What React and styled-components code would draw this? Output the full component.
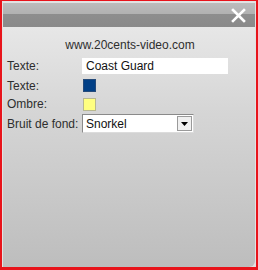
import React from "react";
import styled, { createGlobalStyle } from "styled-components";

const Global = createGlobalStyle`
  html, body { margin: 0; padding: 0; background: #fff; }
  body { font-family: "Liberation Sans", Arial, sans-serif; }
`;

const Frame = styled.div`
  width: 258px;
  height: 270px;
  box-sizing: border-box;
  border: 2px solid #e8141b;
  border-top-width: 1px;
  border-bottom-width: 3px;
  background: #e2e2e2;
  display: flex;
  flex-direction: column;
`;

const Window = styled.div`
  flex: 1;
  margin: 2px 1px 0 1px;
  display: flex;
  flex-direction: column;
  border-radius: 0 0 6px 0;
  overflow: hidden;
  background: linear-gradient(#ececec 0%, #d6d6d6 40%, #bdbdbd 100%);
`;

const TitleBar = styled.div`
  height: 24px;
  display: flex;
  align-items: center;
  justify-content: flex-end;
  padding-right: 9px;
  background: linear-gradient(#bcbcbc 0%, #b2b2b2 44%, #8e8e8e 45%, #8a8a8a 100%);
`;

const Close = styled.svg`
  width: 15px;
  height: 15px;
`;

const Body = styled.div`
  padding: 10px 4px 0 4px;
  display: flex;
  flex-direction: column;
  font-size: 12px;
  color: #2e2e2e;
`;

const Url = styled.div`
  text-align: center;
  height: 16px;
  line-height: 16px;
  margin-bottom: 3px;
  padding-left: 2px;
`;

const Row = styled.div`
  display: grid;
  grid-template-columns: 75px 1fr;
  align-items: center;
  height: ${(p) => p.$h || 18}px;
`;

const Label = styled.span`
  line-height: 14px;
`;

const TextInput = styled.div`
  width: 146px;
  height: 16px;
  background: #fff;
  line-height: 16px;
  padding-left: 4px;
  box-sizing: border-box;
  color: #111;
`;

const Swatch = styled.div`
  width: 13px;
  height: 13px;
  box-sizing: border-box;
  background: ${(p) => p.$c};
  border: 1px solid ${(p) => p.$b};
  margin-left: 1px;
`;

const Select = styled.div`
  width: 112px;
  height: 19px;
  box-sizing: border-box;
  background: #fff;
  border: 1px solid #8a8a8a;
  border-right-color: #dcdcdc;
  border-bottom-color: #dcdcdc;
  display: flex;
  align-items: center;
  justify-content: space-between;
  padding-left: 3px;
  color: #111;
`;

const Drop = styled.div`
  width: 15px;
  height: 15px;
  margin-right: 1px;
  box-sizing: border-box;
  background: #f0f0f0;
  border: 1px solid #9a9a9a;
  display: flex;
  align-items: center;
  justify-content: center;
`;

export default function App() {
  return (
    <>
      <Global />
      <Frame>
        <Window>
          <TitleBar>
            <Close viewBox="0 0 15 15">
              <path d="M2 2 L13 13 M13 2 L2 13" stroke="#fff" strokeWidth="2.6" strokeLinecap="square" />
            </Close>
          </TitleBar>
          <Body>
            <Url>www.20cents-video.com</Url>
            <Row $h={20}>
              <Label>Texte:</Label>
              <TextInput>Coast Guard</TextInput>
            </Row>
            <Row $h={19}>
              <Label>Texte:</Label>
              <Swatch $c="#003f86" $b="#244a7a" />
            </Row>
            <Row>
              <Label>Ombre:</Label>
              <Swatch $c="#ffff80" $b="#b8b890" />
            </Row>
            <Row $h={21}>
              <Label>Bruit de fond:</Label>
              <Select>
                Snorkel
                <Drop>
                  <svg width="7" height="4" viewBox="0 0 7 4">
                    <path d="M0 0 H7 L3.5 4 Z" fill="#000" />
                  </svg>
                </Drop>
              </Select>
            </Row>
          </Body>
        </Window>
      </Frame>
    </>
  );
}
